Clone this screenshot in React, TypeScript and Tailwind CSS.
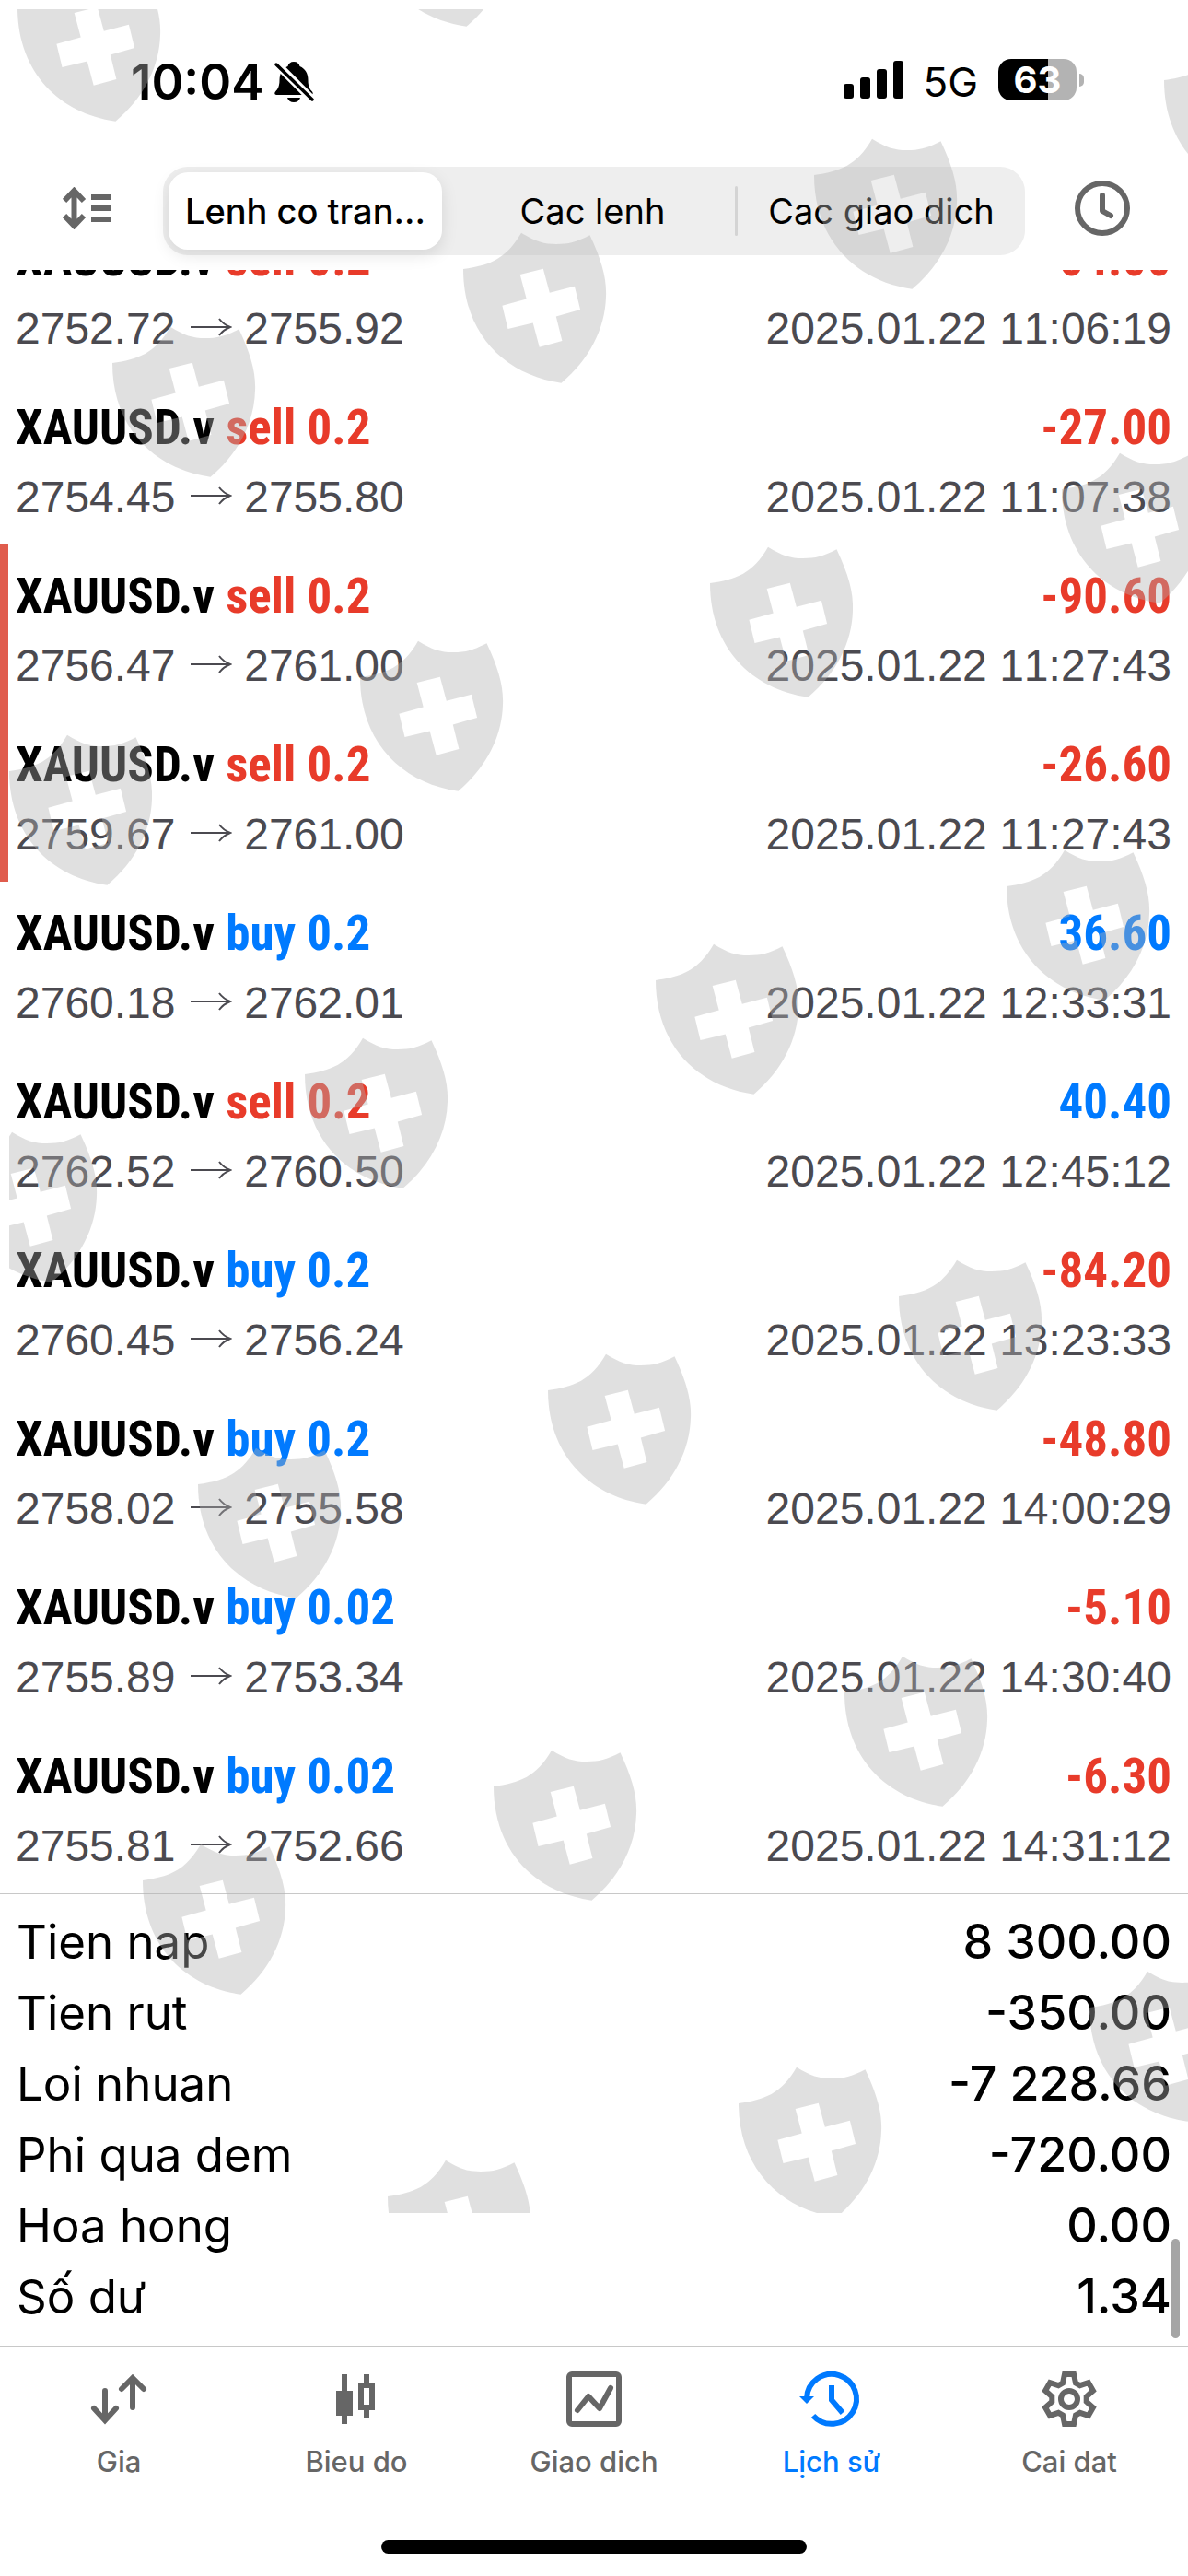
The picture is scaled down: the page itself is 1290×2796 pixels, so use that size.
import { useState } from "react";
import type { ReactNode } from "react";

type Trade = {
  side: "buy" | "sell";
  lots: string;
  open: string;
  close: string;
  time: string;
  profit: string;
  flagged?: boolean;
};

const TRADES: Trade[] = [
  { side: "sell", lots: "0.2", open: "2752.72", close: "2755.92", time: "2025.01.22 11:06:19", profit: "-64.00" },
  { side: "sell", lots: "0.2", open: "2754.45", close: "2755.80", time: "2025.01.22 11:07:38", profit: "-27.00" },
  { side: "sell", lots: "0.2", open: "2756.47", close: "2761.00", time: "2025.01.22 11:27:43", profit: "-90.60", flagged: true },
  { side: "sell", lots: "0.2", open: "2759.67", close: "2761.00", time: "2025.01.22 11:27:43", profit: "-26.60", flagged: true },
  { side: "buy", lots: "0.2", open: "2760.18", close: "2762.01", time: "2025.01.22 12:33:31", profit: "36.60" },
  { side: "sell", lots: "0.2", open: "2762.52", close: "2760.50", time: "2025.01.22 12:45:12", profit: "40.40" },
  { side: "buy", lots: "0.2", open: "2760.45", close: "2756.24", time: "2025.01.22 13:23:33", profit: "-84.20" },
  { side: "buy", lots: "0.2", open: "2758.02", close: "2755.58", time: "2025.01.22 14:00:29", profit: "-48.80" },
  { side: "buy", lots: "0.02", open: "2755.89", close: "2753.34", time: "2025.01.22 14:30:40", profit: "-5.10" },
  { side: "buy", lots: "0.02", open: "2755.81", close: "2752.66", time: "2025.01.22 14:31:12", profit: "-6.30" },
];

const SUMMARY = [
  ["Tien nap", "8 300.00"],
  ["Tien rut", "-350.00"],
  ["Loi nhuan", "-7 228.66"],
  ["Phi qua dem", "-720.00"],
  ["Hoa hong", "0.00"],
  ["Số dư", "1.34"],
];

const SEGMENTS = ["Lenh co tran...", "Cac lenh", "Cac giao dich"];

// left corner of every shield in the overlay
const SHIELDS = [
  [9, -2], [390, -105],
  [1254, 77], [874, 180], [493, 282], [112, 384],
  [1143, 521], [761, 623], [381, 725], [0, 827],
  [1083, 952], [702, 1054], [321, 1156], [-60, 1258],
  [966, 1397], [585, 1499], [205, 1601],
  [907, 1827], [526, 1929], [145, 2031],
  [1173, 2169], [792, 2273], [411, 2374],
];

function TabIcon({ children }: { children: ReactNode }) {
  return (
    <svg
      className="h-[60px] w-[60px] overflow-visible"
      viewBox="0 0 60 60"
      fill="none"
      stroke="currentColor"
      strokeWidth="6"
      aria-hidden="true"
    >
      {children}
    </svg>
  );
}

const TABS = [
  {
    label: "Gia",
    icon: (
      <TabIcon>
        <path d="M15 21V52M3 40l12 13 12-13M45 39V8M33 19L45 7l12 12" strokeLinecap="round" />
      </TabIcon>
    ),
  },
  {
    label: "Bieu do",
    icon: (
      <TabIcon>
        <path d="M8 21h18v27H8zM14 3h6v54h-6z" fill="currentColor" stroke="none" />
        <path d="M35 15h12v24H35zM41 3v10M41 41v10" />
      </TabIcon>
    ),
  },
  {
    label: "Giao dich",
    icon: (
      <TabIcon>
        <rect x="3" y="3" width="54" height="54" rx="3" />
        <path d="M12 42l12-15 12 13 12-22" strokeLinecap="round" strokeLinejoin="round" />
      </TabIcon>
    ),
  },
  {
    label: "Lịch sử",
    icon: (
      <TabIcon>
        <path d="M3 29A27 27 0 1 1 10 48M30 15v16l12 14" />
        <path d="M-5 27h16l-8 8z" fill="currentColor" stroke="none" />
      </TabIcon>
    ),
  },
  {
    label: "Cai dat",
    icon: (
      <TabIcon>
        <path
          transform="translate(30 30)"
          d="M-7-17.5L-5-27H5L7-17.5 11.7-14.8 20.9-17.8 25.9-9.2 18.7-2.7V2.7L25.9 9.2 20.9 17.8 11.7 14.8 7 17.5 5 27H-5L-7 17.5-11.7 14.8-20.9 17.8-25.9 9.2-18.7 2.7V-2.7L-25.9-9.2-20.9-17.8-11.7-14.8z"
        />
        <circle cx="30" cy="30" r="9" />
      </TabIcon>
    ),
  },
];

function StatusBar() {
  return (
    <div className="flex h-[181px] items-start justify-between pt-16 pr-[113px] pl-[142px]">
      <div className="flex items-center gap-2.5">
        <span className="text-[53px] leading-[50px] font-semibold">10:04</span>
        <svg className="h-[46px] w-[44px]" viewBox="0 0 44 46" aria-label="Silent">
          <path
            d="M22 1c3.600 0 6 2 6.500 5 6 2.500 9 8 9 15 0 6 1.500 9.500 4.500 12.500 1.500 2 .5 3.500-2 3.500H4c-2.500 0-3.500-1.500-2-3.500 3-3 4.500-6.500 4.500-12.500 0-7 3-12.500 9-15C16 3 18.400 1 22 1zM15 40h14c-1 3.500-3.500 5-7 5s-6-1.500-7-5z"
            fill="#000"
          />
          <path d="M1 1l43 43" stroke="#fff" strokeWidth="9" />
          <path d="M3 4l39 38" stroke="#000" strokeWidth="3.500" strokeLinecap="round" />
        </svg>
      </div>
      <div className="flex h-[45px] items-center">
        <svg className="h-[41px] w-[65px]" viewBox="0 0 65 41" aria-label="Signal">
          <rect x="0" y="25" width="11" height="16" rx="3" />
          <rect x="18" y="18" width="11" height="23" rx="3" />
          <rect x="36" y="9" width="11" height="32" rx="3" />
          <rect x="54" y="0" width="11" height="41" rx="3" />
        </svg>
        <span className="ml-[21px] pt-1.5 text-[44px] leading-[45px]">5G</span>
        <span className="ml-[22px] flex h-[45px] w-[85px] items-center justify-center rounded-[14px] bg-[linear-gradient(to_right,#000_63%,#b3b3b3_63%)] text-[40px] leading-[45px] font-bold text-white">
          63
        </span>
        <span className="ml-[3px] h-[14px] w-[5px] rounded-r-[5px] bg-[#b3b3b3]" />
      </div>
    </div>
  );
}

function Toolbar() {
  const [active, setActive] = useState(SEGMENTS[0]);

  return (
    <div className="flex h-28 items-start pr-[63px] pl-[68px]">
      <button type="button" aria-label="Sort" className="flex h-[90px] w-[109px] items-center text-[#666]">
        <svg className="h-[46px] w-[52px]" viewBox="0 0 52 46" fill="none" stroke="currentColor" strokeWidth="6">
          <path d="M12.500 4v38M2 15L12.500 4 23 15M2 31l10.500 11L23 31M31 11h21M31 23h21M31 35h21" />
        </svg>
      </button>
      <div role="tablist" className="grid h-24 flex-1 grid-cols-3 items-center rounded-[27px] bg-[#eee]">
        {SEGMENTS.map((name, i) => (
          <button
            key={name}
            type="button"
            role="tab"
            aria-selected={name === active}
            onClick={() => setActive(name)}
            className={
              name === active
                ? "mr-[9px] ml-1.5 flex h-[84px] items-center justify-center rounded-[21px] bg-white text-[38px] leading-[48px] font-medium whitespace-nowrap shadow-[0_6px_18px_rgba(0,0,0,0.1)]"
                : "flex h-[84px] items-center justify-center text-[38px] leading-[48px] whitespace-nowrap"
            }
          >
            <span className="flex-1 text-center">{name}</span>
            {i === 1 && <span className="h-[54px] w-[3px] rounded-full bg-[#d4d4d4]" />}
          </button>
        ))}
      </div>
      <button type="button" aria-label="Period" className="ml-[54px] flex h-[90px] w-[60px] items-center text-[#666]">
        <svg className="h-[60px] w-[60px]" viewBox="0 0 60 60" fill="none" stroke="currentColor" strokeWidth="6">
          <circle cx="30" cy="30" r="27" />
          <path d="M30 16v17l9 5" strokeLinecap="round" strokeLinejoin="round" />
        </svg>
      </button>
    </div>
  );
}

function Arrow() {
  return (
    <svg
      className="inline h-5 w-12 align-[8px]"
      viewBox="0 0 48 20"
      fill="none"
      stroke="currentColor"
      strokeWidth="2"
      role="img"
      aria-label="to"
    >
      <path d="M3 10h41M34 1c3 4 7 7 12 9-5 2-9 5-12 9" />
    </svg>
  );
}

function TradeRow({ trade }: { trade: Trade }) {
  const sideColor = trade.side === "buy" ? "text-[#007aff]" : "text-[#e83b2a]";
  const profitColor = trade.profit.startsWith("-") ? "text-[#e83b2a]" : "text-[#007aff]";

  return (
    <li
      className={`flex h-[183px] flex-col gap-[18px] border-l-[9px] pt-[26px] pr-[18px] pl-2 ${
        trade.flagged ? "border-[#e05c4d]" : "border-transparent"
      }`}
    >
      <div className="flex justify-between font-['Roboto_Condensed','Liberation_Sans_Narrow','Liberation_Sans',sans-serif] text-[53px] leading-[60px] font-bold">
        <span>
          XAUUSD.v <span className={sideColor}>{trade.side} {trade.lots}</span>
        </span>
        <span className={profitColor}>{trade.profit}</span>
      </div>
      <div className="flex justify-between font-['Liberation_Sans',sans-serif] text-[48px] leading-[56px] text-[#4b4a50] [font-kerning:none]">
        <span>{trade.open} <Arrow /> {trade.close}</span>
        <time>{trade.time}</time>
      </div>
    </li>
  );
}

function Watermark() {
  return (
    <div className="pointer-events-none absolute top-[10px] right-0 left-[10px] h-[2392px] overflow-hidden">
      <svg className="h-full w-full" fill="#b2b2b2" fillOpacity="0.4" fillRule="evenodd" aria-hidden="true">
        {SHIELDS.map(([x, y]) => (
          <path
            key={`${x}-${y}`}
            transform={`translate(${x} ${y})`}
            d="M0 0C28-4 46-10 63-39.300 78-30 87-27 101-27S122-29 137.500-36.700C150-10 156 10 155 30 154 65 137 98 106.500 123.700 45 115 0 70 0 0zM61.700 6L68.700 32.400 42.400 39.700 48.500 65 75.700 58.400 82.700 84.700 107.400 78 100.800 51.400 127.100 44 120.900 18.700 93.800 25.700 86.800-.3z"
          />
        ))}
      </svg>
    </div>
  );
}

export default function App() {
  const [tab, setTab] = useState("Lịch sử");

  return (
    <div className="relative flex min-h-screen flex-col overflow-hidden bg-white font-['Inter',sans-serif] text-black">
      <StatusBar />
      <Toolbar />

      <main className="relative flex-1 overflow-hidden">
        {/* list is scrolled to the end, first row is partly under the toolbar */}
        <ul className="-mt-[68px]">
          {TRADES.map((trade, i) => (
            <TradeRow key={i} trade={trade} />
          ))}
        </ul>
        <dl className="border-t border-[#c8c8c8] px-[18px] pt-[13px] pb-[14px]">
          {SUMMARY.map(([label, value]) => (
            <div key={label} className="flex justify-between leading-[77px]">
              <dt className="text-[51px]">{label}</dt>
              <dd className="text-[52px] font-medium">{value}</dd>
            </div>
          ))}
        </dl>
        <div className="absolute right-[9px] bottom-2 h-[108px] w-[9px] rounded-full bg-[#a5a5a5]" />
      </main>

      <nav className="flex h-[211px] border-t border-[#c8c8c8] pt-[27px]">
        {TABS.map(({ label, icon }) => (
          <button
            key={label}
            type="button"
            onClick={() => setTab(label)}
            className={`flex flex-1 flex-col items-center gap-4 ${tab === label ? "text-[#007aff]" : "text-[#666]"}`}
          >
            {icon}
            <span className="text-[31px] leading-[44px] font-medium">{label}</span>
          </button>
        ))}
      </nav>
      <div className="mx-auto mb-6 h-[15px] w-[462px] rounded-full bg-black" />

      <Watermark />
    </div>
  );
}
